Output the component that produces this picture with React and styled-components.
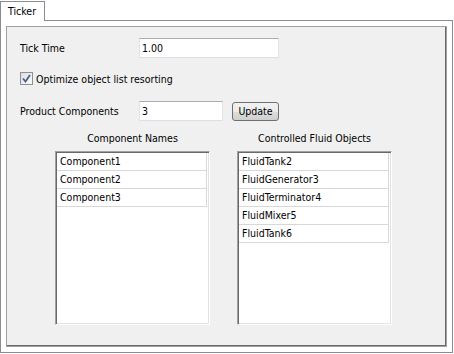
import React, { useState } from 'react'
import styled, { createGlobalStyle } from 'styled-components'

const GlobalStyle = createGlobalStyle`
  html, body {
    margin: 0;
    padding: 0;
    background: #ffffff;
  }
  body {
    font-family: "DejaVu Sans Condensed", "DejaVu Sans", Tahoma, sans-serif;
    font-size: 10.5px;
    color: #000000;
  }
`

const Window = styled.div`
  width: 454px;
  height: 354px;
  box-sizing: border-box;
  padding-top: 1px;
  display: flex;
  flex-direction: column;
`

const TabStrip = styled.div`
  display: flex;
  height: 19px;
`

const Tab = styled.div`
  position: relative;
  z-index: 1;
  width: 45px;
  height: 20px;
  box-sizing: border-box;
  border: 1px solid #898c95;
  border-bottom: none;
  background: #ffffff;
  padding-left: 7px;
  line-height: 18px;
`

const Pane = styled.div`
  width: 453px;
  height: 333px;
  box-sizing: border-box;
  border: 1px solid #898c95;
  background: #ffffff;
  padding: 5px;
`

const Panel = styled.div`
  height: 100%;
  box-sizing: border-box;
  background: #f0f0f0;
  border: 1px solid #a0a0a0;
  box-shadow: inset -1px -1px 0 #696969;
  padding: 11px 0 0 13px;
  display: flex;
  flex-direction: column;
`

const Row = styled.div`
  display: flex;
  align-items: center;
  height: ${p => p.$h || 20}px;
  margin-top: ${p => p.$top || 0}px;
`

const Label = styled.span`
  width: 119px;
  flex: none;
`

const TextBox = styled.div`
  width: ${p => p.$w}px;
  height: 20px;
  box-sizing: border-box;
  background: #ffffff;
  border: 1px solid #dbdfe6;
  border-top-color: #abadb3;
  border-left-color: #e2e3ea;
  border-right-color: #e2e3ea;
  padding-left: 2px;
  line-height: 18px;
`

const Button = styled.button`
  margin-left: 9px;
  width: 47px;
  height: 19px;
  box-sizing: border-box;
  padding: 0;
  border: 1px solid #707070;
  border-radius: 3px;
  background: linear-gradient(#f2f2f2 0%, #ebebeb 50%, #dddddd 51%, #cfcfcf 100%);
  font-family: inherit;
  font-size: 10.5px;
  color: #000000;
  line-height: 17px;
`

const Check = styled.label`
  display: flex;
  align-items: center;
  gap: 3px;
`

const Box = styled.span`
  width: 13px;
  height: 13px;
  box-sizing: border-box;
  border: 1px solid #8e8f8f;
  background: linear-gradient(135deg, #dcdcdc, #fbfbfb);
  display: flex;
  align-items: center;
  justify-content: center;
`

const Lists = styled.div`
  display: flex;
  gap: 27px;
  margin-left: 35px;
  margin-top: 10px;
`

const Column = styled.div`
  width: 155px;
  display: flex;
  flex-direction: column;
`

const Header = styled.div`
  text-align: center;
  line-height: 14px;
  margin-bottom: 6px;
`

const ListBox = styled.div`
  height: 174px;
  box-sizing: border-box;
  background: #ffffff;
  border: 1px solid;
  border-color: #a0a0a0 #ffffff #ffffff #a0a0a0;
  box-shadow: inset 1px 1px 0 #696969, inset -1px -1px 0 #e3e3e3;
  padding: 1px 2px 0 1px;
`

const Item = styled.div`
  height: 18px;
  box-sizing: border-box;
  border-bottom: 1px solid #d8d8d8;
  border-right: 1px solid #d8d8d8;
  padding-left: 3px;
  line-height: 17px;
  white-space: nowrap;
`

const components = ['Component1', 'Component2', 'Component3']
const fluids = ['FluidTank2', 'FluidGenerator3', 'FluidTerminator4', 'FluidMixer5', 'FluidTank6']

export default function App() {
  const [checked, setChecked] = useState(true)
  return (
    <Window>
      <GlobalStyle />
      <TabStrip>
        <Tab>Ticker</Tab>
      </TabStrip>
      <Pane>
        <Panel>
          <Row>
            <Label>Tick Time</Label>
            <TextBox $w={140}>1.00</TextBox>
          </Row>
          <Row $h={13} $top={14}>
            <Check onClick={() => setChecked(c => !c)}>
              <Box>
                {checked && (
                  <svg width="9" height="9" viewBox="0 0 9 9">
                    <path d="M1 4.5 L3.5 7.5 L8 1" fill="none" stroke="#4a5f97" strokeWidth="1.8" />
                  </svg>
                )}
              </Box>
              Optimize object list resorting
            </Check>
          </Row>
          <Row $top={16}>
            <Label>Product Components</Label>
            <TextBox $w={84}>3</TextBox>
            <Button>Update</Button>
          </Row>
          <Lists>
            <Column>
              <Header>Component Names</Header>
              <ListBox>
                {components.map(c => <Item key={c}>{c}</Item>)}
              </ListBox>
            </Column>
            <Column>
              <Header>Controlled Fluid Objects</Header>
              <ListBox>
                {fluids.map(f => <Item key={f}>{f}</Item>)}
              </ListBox>
            </Column>
          </Lists>
        </Panel>
      </Pane>
    </Window>
  )
}
